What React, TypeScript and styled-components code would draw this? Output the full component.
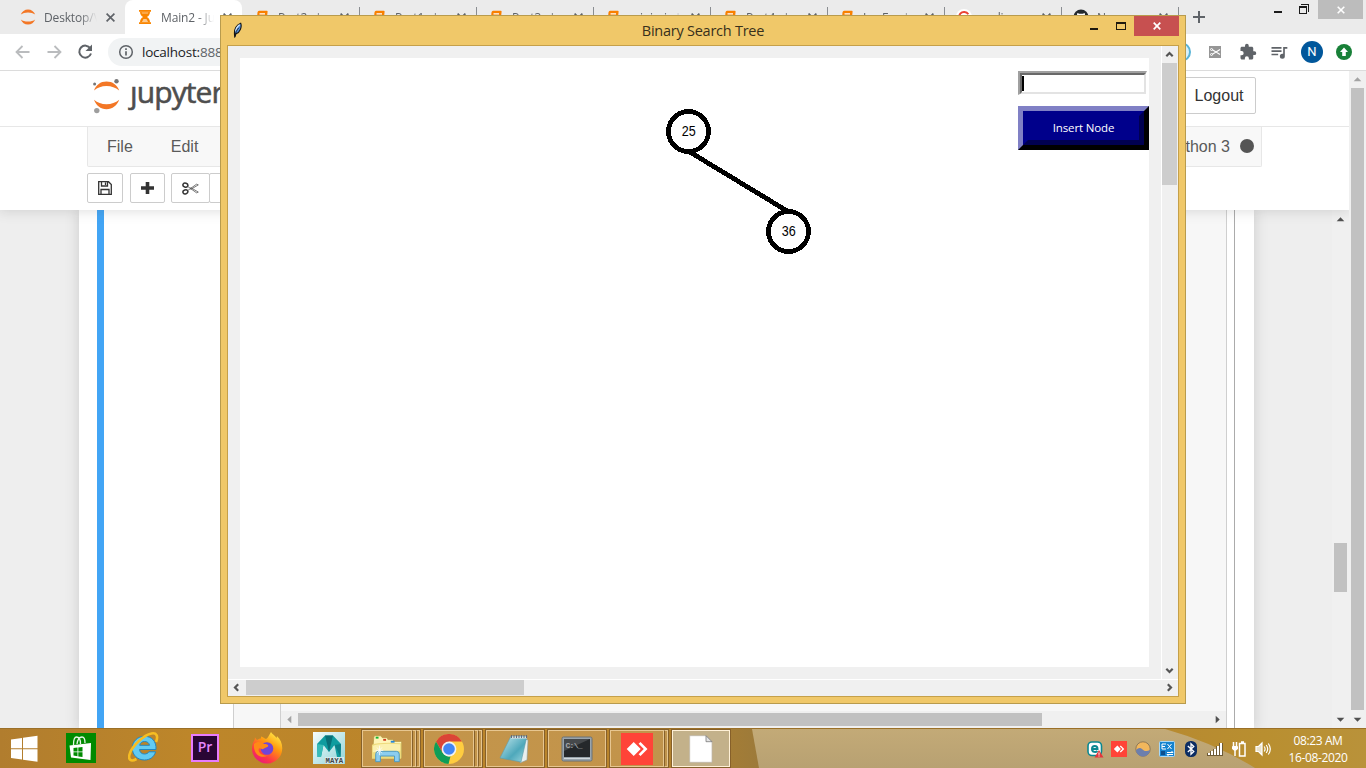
import React from "react";
import styled, { createGlobalStyle, css } from "styled-components";

const ui = `"Open Sans", "Noto Sans", sans-serif`;
const helv = `"Liberation Sans", Arial, sans-serif`;

const Global = createGlobalStyle`
  *{box-sizing:border-box}
  body{margin:0;overflow:hidden;background:#fff;font-family:${ui}}
  svg{display:block;flex:none}
`;

const Desktop = styled.div`
  position: relative;
  width: 1366px;
  height: 768px;
  overflow: hidden;
  display: flex;
  flex-direction: column;
`;
const Browser = styled.div`
  flex: none;
  height: 728px;
  display: flex;
  flex-direction: column;
  overflow: hidden;
`;

/* ---------- tab strip ---------- */
const TabStrip = styled.div`
  height: 34px;
  flex: none;
  display: flex;
  padding-left: 8px;
  background: #ebebeb;
`;
const Tab = styled.div<{ $active?: boolean; $sep?: boolean }>`
  position: relative;
  width: 117px;
  height: 34px;
  flex: none;
  display: flex;
  align-items: center;
  padding: 0 10px 0 12px;
  border-radius: 8px 8px 0 0;
  background: ${(p) => (p.$active ? "#fff" : "transparent")};
  ${(p) =>
    p.$sep &&
    css`
      &::after {
        content: "";
        position: absolute;
        right: -1px;
        top: 7px;
        width: 1px;
        height: 20px;
        background: #8a8d91;
      }
    `}
`;
const Favicon = styled.div`
  width: 16px;
  display: flex;
  justify-content: center;
`;
const TabTitle = styled.span`
  width: 54px;
  margin: 1px 0 0 8px;
  overflow: hidden;
  white-space: nowrap;
  font-size: 12px;
  line-height: 16px;
  letter-spacing: -0.15px;
  color: #5f6368;
  mask-image: linear-gradient(to right, #000 36px, transparent 53px);
`;
const TabClose = styled.svg`
  margin-left: auto;
`;
const NewTab = styled.div`
  display: flex;
  align-items: center;
  padding-left: 15px;
`;
const BrowserControls = styled.div`
  margin-left: auto;
  display: flex;
  align-items: flex-start;
  padding-right: 3px;
`;
const ControlIcon = styled.div`
  width: 26px;
  height: 19px;
  display: flex;
  justify-content: center;
`;
const BrowserClose = styled.div`
  width: 45px;
  height: 19px;
  margin-left: 1px;
  display: flex;
  align-items: center;
  justify-content: center;
  background: #bcbcbc;
`;

/* ---------- toolbar ---------- */
const Toolbar = styled.div`
  height: 37px;
  flex: none;
  display: flex;
  align-items: center;
  padding: 0 14px 0 13px;
  border-bottom: 1px solid #dcdcdc;
  background: #fff;
`;
const NavButtons = styled.div`
  width: 95px;
  display: flex;
  gap: 11px;
`;
const Omnibox = styled.div`
  width: 1040px;
  height: 28px;
  display: flex;
  align-items: center;
  gap: 8px;
  padding-left: 10px;
  border-radius: 14px;
  background: #f1f3f4;
  color: #5f6368;
  font-size: 13.5px;
  letter-spacing: -0.22px;
  b {
    font-weight: 400;
    color: #202124;
  }
`;
const Extensions = styled.div`
  margin-left: auto;
  display: flex;
  align-items: center;
  gap: 12px;
`;
const Avatar = styled.div`
  width: 22px;
  height: 22px;
  margin-right: 1px;
  border-radius: 50%;
  background: #01579b;
  color: #fff;
  font: 13px/22px Roboto, sans-serif;
  text-align: center;
`;

/* ---------- page ---------- */
const Page = styled.div`
  flex: 1;
  min-height: 0;
  display: flex;
`;
const PageMain = styled.div`
  width: 1349px;
  display: flex;
  flex-direction: column;
  overflow: hidden;
`;
const Header = styled.div`
  z-index: 1;
  height: 139px;
  flex: none;
  background: #fff;
  box-shadow: 0 0 12px 1px rgba(87, 87, 87, 0.2);
`;
const LogoRow = styled.div`
  height: 56px;
  display: flex;
  justify-content: space-between;
  padding: 6px 93px 0 91px;
  border-bottom: 1px solid #e7e7e7;
`;
const Logo = styled.div`
  display: flex;
`;
const Wordmark = styled.span`
  margin: -7px 0 0 3px;
  padding-left: 4px;
  font-size: 30px;
  line-height: 44px;
  letter-spacing: -0.9px;
  color: #4e4e4e;
  -webkit-text-stroke: 0.6px #4e4e4e;
  clip-path: polygon(11px 0, 100% 0, 100% 100%, 0 100%, 0 16px, 11px 16px);
`;
const Logout = styled.div`
  width: 74px;
  height: 37px;
  border: 1px solid #ccc;
  border-radius: 2px;
  color: #333;
  font: 16px/36px ${helv};
  text-align: center;
`;
const MenuBar = styled.div`
  width: 1175px;
  height: 40px;
  margin-left: 87px;
  display: flex;
  align-items: center;
  gap: 38px;
  padding: 0 7px 0 19px;
  border: 1px solid #e7e7e7;
  border-top: 0;
  border-radius: 0 0 2px 2px;
  background: #f8f8f8;
  color: #5a5a5a;
  font: 16px/20px ${helv};
`;
const Kernel = styled.div`
  margin-left: auto;
  display: flex;
  align-items: center;
  gap: 10px;
`;
const KernelDot = styled.i`
  width: 14px;
  height: 14px;
  margin-top: -1px;
  border-radius: 50%;
  background: #555;
`;
const ToolRow = styled.div`
  display: flex;
  padding: 6px 0 0 87px;
`;
const ToolButton = styled.div<{ $w?: number; $gap?: number }>`
  width: ${(p) => p.$w ?? 35}px;
  height: 30px;
  margin-left: ${(p) => p.$gap ?? 0}px;
  display: flex;
  align-items: center;
  justify-content: center;
  border: 1px solid #ccc;
  border-radius: 2px;
`;
const NotebookArea = styled.div`
  flex: 1;
  min-height: 0;
  display: flex;
  padding-left: 79px;
  background: #eee;
`;
const Notebook = styled.div`
  width: 1175px;
  display: flex;
  padding-left: 18px;
  background: #fff;
  box-shadow: 0 0 12px 1px rgba(87, 87, 87, 0.2);
`;
const Cell = styled.div`
  width: 1138px;
  display: flex;
  padding: 0 7px 0 129px;
  border-left: 7px solid #42a5f5;
  border-right: 1px solid #ababab;
`;
const OutputPrompt = styled.div`
  width: 47px;
  background: #f7f7f7;
  border-left: 1px solid #cfcfcf;
`;
const Output = styled.div`
  flex: 1;
  display: flex;
  flex-direction: column;
  justify-content: flex-end;
  background: #f7f7f7;
  border: solid #cfcfcf;
  border-width: 0 1px;
`;

/* ---------- scroll bars ---------- */
const ScrollBar = styled.div<{ $dir: "v" | "h" }>`
  flex: none;
  display: flex;
  flex-direction: ${(p) => (p.$dir === "v" ? "column" : "row")};
  ${(p) => (p.$dir === "v" ? "width: 17px;" : "height: 17px;")}
  background: #f0f0f0;
`;
const PageScroll = styled(ScrollBar)`
  padding: ${(p) => (p.$dir === "v" ? "0 2px" : "2px 0")};
`;
const AreaScroll = styled(PageScroll)`
  margin-left: auto;
  padding-top: 1px;
`;
const TkScroll = styled(ScrollBar)`
  border: 0 solid #fff;
  ${(p) =>
    p.$dir === "v"
      ? "border-left-width:1px; padding-right:1px;"
      : "border-top-width:1px; padding-bottom:1px;"}
`;
const Thumb = styled.div<{ $size: number; $tk?: boolean; $gap?: number }>`
  flex: 0 0 ${(p) => p.$size}px;
  margin-left: ${(p) => p.$gap ?? 0}px;
  background: ${(p) => (p.$tk ? "#cdcdcd" : "#c1c1c1")};
`;
const Track = styled.div<{ $size?: number }>`
  flex: ${(p) => (p.$size ? `0 0 ${p.$size}px` : "1")};
`;
const ArrowBox = styled.div`
  flex: 0 0 17px;
  display: flex;
  align-items: center;
  justify-content: center;
`;

/* ---------- floating window ---------- */
const Window = styled.div`
  position: absolute;
  left: 220px;
  top: 15px;
  z-index: 2;
  width: 966px;
  height: 689px;
  display: flex;
  flex-direction: column;
  padding: 0 6px 6px;
  border: 1px solid #b89b4d;
  background: #f0c869;
`;
const TitleBar = styled.div`
  height: 29px;
  flex: none;
  display: grid;
  grid-template-columns: 200px 1fr 200px;
  padding-left: 5px;
`;
const Title = styled.div`
  padding-right: 5px;
  text-align: center;
  font-size: 14.5px;
  line-height: 29px;
  letter-spacing: -0.25px;
  color: #38301b;
`;
const Feather = styled.svg`
  margin-top: 6px;
`;
const WindowControls = styled.div`
  display: flex;
  justify-content: flex-end;
`;
const WindowButton = styled.div<{ $close?: boolean }>`
  width: ${(p) => (p.$close ? 45 : 27)}px;
  height: 20px;
  display: flex;
  align-items: center;
  justify-content: center;
  background: ${(p) => (p.$close ? "#c75050" : "transparent")};
`;
const Client = styled.div`
  flex: 1;
  display: flex;
  flex-direction: column;
  border: 1px solid #c5a04a;
  background: #f0f0f0;
`;
const ClientBody = styled.div`
  flex: 1;
  display: flex;
`;
const CanvasFrame = styled.div`
  flex: 1;
  padding: 12px;
`;
const Canvas = styled.div`
  position: relative;
  width: 909px;
  height: 609px;
  background: #fff;
`;
const Tree = styled.svg`
  position: absolute;
  inset: 0;
  font: 14px ${helv};
`;
const Controls = styled.div`
  width: 131px;
  margin-left: 778px;
  padding-top: 13px;
  display: flex;
  flex-direction: column;
  gap: 11px;
`;
const Entry = styled.div`
  width: 129px;
  height: 24px;
  border: solid;
  border-width: 2px 1px 1px 2px;
  border-color: #a0a0a0 #fff #fff #a0a0a0;
`;
const EntryInner = styled.div`
  height: 21px;
  border: 2px solid;
  border-color: #696969 #e3e3e3 #e3e3e3 #696969;
`;
const Caret = styled.div`
  width: 2px;
  height: 15px;
  margin-top: 1px;
  background: #000;
`;
const InsertButton = styled.div`
  height: 44px;
  border: 5px solid;
  border-color: #8080c5 #000 #000 #8080c5;
`;
const InsertFace = styled.div`
  height: 34px;
  border: 5px solid;
  border-color: #00008b #000050 #000050 #00008b;
  background: #00008b;
  color: #fff;
  font-size: 11.5px;
  line-height: 24px;
  letter-spacing: -0.15px;
  text-align: center;
`;

/* ---------- taskbar ---------- */
const Taskbar = styled.div`
  position: relative;
  z-index: 3;
  height: 40px;
  flex: none;
  display: flex;
  border-top: 1px solid #9b7028;
  background: #bb852b;
`;
const Wallpaper = styled.svg`
  position: absolute;
  inset: 0;
  z-index: -1;
`;
const StartButton = styled.div`
  width: 50px;
  display: flex;
  align-items: center;
  padding-left: 10px;
`;
const Pinned = styled.div`
  width: 62px;
  display: flex;
  align-items: center;
  justify-content: center;
  padding-bottom: 2px;
`;
const Tasks = styled.div`
  display: flex;
  gap: 2px;
  padding-left: 1px;
`;
const Task = styled.div<{ $active?: boolean }>`
  width: 60px;
  height: 39px;
  display: flex;
  border: 1px solid #86602a;
  background: ${(p) => (p.$active ? "#c3b18a" : "rgba(207,171,120,.42)")};
  ${(p) => p.$active && "box-shadow: inset 0 0 0 1px #fff;"}
`;
const TaskFace = styled.div`
  flex: 1;
  display: flex;
  align-items: center;
  justify-content: center;
  border: 1px solid rgba(255, 232, 190, 0.6);
`;
const TaskEdge = styled.div`
  width: 4px;
  border: 1px solid rgba(255, 232, 190, 0.6);
  border-left-color: #86602a;
`;
const Tray = styled.div`
  margin-left: auto;
  display: flex;
  align-items: center;
  padding-right: 7px;
`;
const TrayIcon = styled.div`
  width: 24px;
  display: flex;
  justify-content: center;
  padding-top: 1px;
`;
const Clock = styled.div`
  width: 82px;
  margin-left: 2px;
  color: #fff;
  font-size: 12px;
  line-height: 17px;
  letter-spacing: -0.38px;
  text-align: center;
  white-space: nowrap;
`;

/* ---------- small drawings ---------- */
type Dir = "up" | "down" | "left" | "right";
const turn: Record<Dir, number> = { up: 0, right: 90, down: 180, left: 270 };

const Triangle = ({ dir, light }: { dir: Dir; light?: boolean }) => (
  <ArrowBox>
    <svg width="9" height="9" viewBox="0 0 9 9">
      <path d="M4.5 2.300 8.300 6.300H.7z" fill={light ? "#a3a3a3" : "#505050"} transform={`rotate(${turn[dir]} 4.5 4.5)`} />
    </svg>
  </ArrowBox>
);
const Chevron = ({ dir }: { dir: Dir }) => (
  <ArrowBox>
    <svg width="9" height="9" viewBox="0 0 9 9">
      <path d="M1.3 6.2 4.5 3l3.2 3.2" fill="none" stroke="#555" strokeWidth="2.2" transform={`rotate(${turn[dir]} 4.5 4.5)`} />
    </svg>
  </ArrowBox>
);
const Cross = ({ size, color, w }: { size: number; color: string; w: number }) => (
  <svg width={size} height={size} viewBox="0 0 8 8">
    <path d="M.7.7l6.6 6.6M7.3.7.7 7.3" stroke={color} strokeWidth={w} />
  </svg>
);
const JupyterMark = () => (
  <svg width="16" height="16" viewBox="0 0 16 16" fill="#f37726">
    <path d="M.8 5.6C2 2.500 4.600.5 8 .5s6 2 7.200 5.100C13.300 4.200 11 3.400 8 3.400S2.700 4.200.8 5.600z" />
    <path d="M.8 10.400C2 13.500 4.600 15.500 8 15.500s6-2 7.200-5.100C13.300 11.800 11 12.600 8 12.600s-5.300-.8-7.200-2.200z" />
  </svg>
);
const Hourglass = () => (
  <svg width="12" height="16" viewBox="0 0 12 16" fill="#f98500">
    <path d="M0 1h12v1.800H0zM0 13.200h12V15H0z" />
    <path d="M1 2.500h10c0 3-1.300 4.600-3.200 5.500 1.900.9 3.200 2.500 3.200 5.500H1c0-3 1.300-4.600 3.200-5.500C2.300 7.100 1 5.500 1 2.500z" />
    <path d="M2.600 3.500h6.800l-.4 1H3zM4.500 10h3l1.600 3H2.900z" fill="#ffe0bd" opacity=".75" />
  </svg>
);
const Book = () => (
  <svg width="12" height="14" viewBox="0 0 12 14">
    <path d="M3 .8h7.800q1 0 .8 1L10.500 12q-.3 1.200-1.300 1.200H2Q.5 13.200.7 11L1.500 2.300Q1.800.8 3 .8z" fill="#f98000" />
    <path d="M3.500 3.800h5.500M3.500 6.300h5.500" stroke="#fff" strokeWidth="1.300" />
  </svg>
);
const SiteG = () => (
  <svg width="16" height="16" viewBox="0 0 16 16">
    <circle cx="8" cy="8" r="8" fill="#fff" />
    <path d="M12.300 5.300A5 5 0 1 0 13 8.500H8" fill="none" stroke="#ea4335" strokeWidth="2" />
  </svg>
);
const GitHubMark = () => (
  <svg width="16" height="16" viewBox="0 0 16 16">
    <circle cx="8" cy="8" r="7.600" fill="#24292e" />
    <path d="M4.300 4l2 .8h3.400l2-.8.4 2.500c.6 3-1 4.500-4.100 4.500S3.300 9.500 3.900 6.500zM6 11h4v4H6z" fill="#fff" />
  </svg>
);
const LogoMark = () => (
  <svg width="32" height="38" viewBox="0 0 32 38">
    <path d="M3 13.500C5 8 9.500 4.600 15.500 4.600S26.200 8 28.200 13.500C24.500 10.500 20.500 9 15.500 9S6.500 10.500 3 13.500zM3 22.700c2 5.600 6.500 9.500 12.500 9.500s10.700-3.900 12.700-9.500C24.500 25.600 20.500 27.200 15.500 27.200S6.500 25.600 3 22.700z" fill="#f37726" />
    <circle cx="25.500" cy="4.200" r="2.200" fill="#767677" />
    <circle cx="3.600" cy="7" r="1.500" fill="#767677" />
    <circle cx="5.800" cy="33.600" r="2.700" fill="#9e9e9e" />
  </svg>
);
const tabs: [React.ReactNode, string, boolean?][] = [
  [<JupyterMark />, "Desktop/\\"],
  [<Hourglass />, "Main2 - Ju", true],
  [<Book />, "Part2 - Ju"],
  [<Book />, "Part1 - Ju"],
  [<Book />, "Part3 - Ju"],
  [<Book />, "minimi - Ju"],
  [<Book />, "Part4 - Ju"],
  [<Book />, "Ins Fo - Ju"],
  [<SiteG />, "scaling -"],
  [<GitHubMark />, "New"],
];

const AnyDesk = ({ size }: { size: number }) => (
  <svg width={size} height={size} viewBox="0 0 32 32">
    <path d="M0 0h32v32H0z" fill="#ff4438" />
    <path d="M12.700 9l7 7-7 7-7-7zM17.600 10.800l1.900-1.800 7 7-7 7-1.900-1.800 5.200-5.200z" fill="#fff" />
  </svg>
);
const Store = () => (
  <svg width="30" height="30" viewBox="0 0 30 30">
    <path d="M0 0h30v30H0z" fill="#008a00" />
    <path d="M7.500 12q0-8 3-8 4 0 4 7M11 11q1-7 5-7 3 0 3 6" fill="none" stroke="#e8f6e8" strokeWidth="1.300" />
    <path d="M3.500 12.500l21.500-2.500-.5 17L5 24.500z" fill="#fff" />
    <path d="M7.500 15l4-.5v4h-4zm4.800-.6L16.500 14v4.500h-4.200zM7.500 19.200h4v4l-4-.6zm4.800 0h4.200V24l-4.200-.6z" fill="#008a00" />
  </svg>
);
const Explorer = () => (
  <svg width="32" height="31" viewBox="0 0 34 32">
    <path d="M3 4q0-1.500 1.500-1.500h6L12 4.500h5l1 2h5l1.500 2h7q1 0 1 1V26H1z" fill="#fff5b8" stroke="#b59a45" strokeWidth=".8" />
    <path d="M1 12q8-3 31-1.500V27H1z" fill="#eedb7c" />
    <path d="M2 13q9-3 29-1.500v7L2 20z" fill="#fbf0ae" />
    <path d="M5 3.500h3v2H5z" fill="#16b432" />
    <path d="M13 5.800h3v2h-3z" fill="#d23d20" />
    <path d="M21 7.800h4v2h-4z" fill="#2486d8" />
    <path d="M5 30v-8q0-3 3-3h19q3 0 3 3v8h-5v-6H10v6z" fill="#8ccdef" stroke="#4a97bf" />
    <path d="M9 13v10M5 18h8M6.500 15l5 6M11.500 15l-5 6" stroke="#fff" strokeWidth=".8" />
  </svg>
);
const Chrome = () => (
  <svg width="30" height="30" viewBox="0 0 30 30">
    <circle cx="15" cy="15" r="15" fill="#ffcd40" />
    <path d="M15 15 8.500 18.750 2 7.500A15 15 0 0 1 28 7.500H15z" fill="#db4437" />
    <path d="M2 7.500 8.500 18.750 15 22.500 14.500 30A15 15 0 0 1 2 7.500z" fill="#0f9d58" />
    <path d="M14.500 30 21.500 18.750 15 15 10 20l4 3z" fill="#ffcd40" />
    <path d="M8.500 18.750A7.500 7.500 0 0 0 16.500 22.300L14.500 30z" fill="#0f9d58" />
    <circle cx="15" cy="15" r="7.400" fill="#f1f1f1" />
    <circle cx="15" cy="15" r="5.800" fill="#4285f4" />
  </svg>
);
const Notepad = () => (
  <svg width="32" height="30" viewBox="0 0 32 30">
    <defs>
      <linearGradient id="np" x1="0" y1="0" x2="1" y2="1">
        <stop offset="0" stopColor="#c8eaf0" />
        <stop offset=".6" stopColor="#4ea8bb" />
        <stop offset="1" stopColor="#a0d8e0" />
      </linearGradient>
    </defs>
    <path d="M23 4l6 2-1 20-7 3z" fill="#e9efef" stroke="#8a9a9a" strokeWidth=".6" />
    <path d="M12 2h16l-6 26L1 24z" fill="url(#np)" stroke="#5e9aa8" strokeWidth=".6" />
    <path d="M12 3.500h16" stroke="#dce4e4" strokeWidth="2" />
    <path d="M12 2.500h16" stroke="#667" strokeWidth="3" strokeDasharray="1 1.500" />
  </svg>
);
const Terminal = () => (
  <svg width="32" height="26" viewBox="0 0 32 26">
    <rect x="1" y="1" width="30" height="24" rx="1.500" fill="#9aa5ad" stroke="#687077" />
    <path d="M3 3h26v18H3z" fill="#25282b" />
    <path d="M3 3h26L3 15z" fill="#46494c" />
    <path d="M3 22.500h26" stroke="#d2d8dc" />
    <text x="4.500" y="11.500" fill="#a6a9ac" fontFamily="Liberation Mono, monospace" fontSize="8" fontWeight="700" letterSpacing="-.7">C:\_</text>
  </svg>
);
const BlankFile = () => (
  <svg width="24" height="28" viewBox="0 0 24 28">
    <path d="M.7.700H17L23 6.700V27.300H.7z" fill="#fff" stroke="#bbb6aa" strokeWidth=".7" />
    <path d="M17 .7v6h6z" fill="#e4e4e4" stroke="#777" strokeWidth=".8" />
  </svg>
);
const IE = () => (
  <svg width="31" height="31" viewBox="0 0 31 31">
    <path d="M28 17.500H11.500c.4 3 2.300 4.500 5 4.500 2 0 3.500-.8 4.400-2.200h6.700C26 25 22 28 16.500 28 9.500 28 4.300 23 4.300 16.200S9.500 4.300 16.500 4.300c7.300 0 12 5 11.500 13.200zM11.700 13.300h9.800c-.4-2.500-2.300-3.800-4.900-3.800s-4.400 1.300-4.900 3.800z" fill="#62cbf3" stroke="#2386c0" strokeWidth="1" />
    <path d="M28 10C30.500 4 28.500.5 23.500 1.500 16 3 4 13.500 1.500 22.500c-1.500 5.500 1.500 7.500 7 4.500" fill="none" stroke="#f6bd22" strokeWidth="2.600" />
  </svg>
);
const Premiere = () => (
  <svg width="28" height="28" viewBox="0 0 28 28">
    <path d="M1 1h26v26H1z" fill="#2a0634" stroke="#e77cff" strokeWidth="2" />
    <text x="14" y="18.300" textAnchor="middle" fill="#e588ff" fontFamily="Open Sans, sans-serif" fontSize="14" fontWeight="600">Pr</text>
  </svg>
);
const Firefox = () => (
  <svg width="32" height="32" viewBox="0 0 32 32">
    <defs>
      <linearGradient id="ff" x1=".85" y1="0" x2=".2" y2="1">
        <stop offset="0" stopColor="#fff44f" />
        <stop offset=".4" stopColor="#ff980e" />
        <stop offset=".75" stopColor="#ff3647" />
        <stop offset="1" stopColor="#e31587" />
      </linearGradient>
    </defs>
    <path d="M20 0c1 2 4 3.500 5.500 6 .5-.8.400-2 .4-2 3.500 3 5.600 8 5.300 13A15 15 0 0 1 16 31.500 15 15 0 0 1 1 17c0-4 1-7 2.500-9L4 5.500l2 2.500c2-1.500 3-1.500 4-1.500V4.500c2 .5 3.500 2 5 2.500 2-1 3-4 5-7z" fill="url(#ff)" />
    <circle cx="16" cy="16.500" r="6.300" fill="#7145d8" />
    <path d="M3 12c4-3 7-2 10 0 3 0 5 1 4 2.500-1 1-3 1-4 2-2 2-3-1-5 0-2 4 4 8 9 7-7 4-15-1-14-11.500z" fill="#ff8a16" />
  </svg>
);
const Maya = () => (
  <svg width="32" height="32" viewBox="0 0 32 32">
    <defs>
      <linearGradient id="my" x1="0" y1="0" x2="1" y2="1">
        <stop offset="0" stopColor="#f6fcfc" />
        <stop offset="1" stopColor="#8fd4d8" />
      </linearGradient>
    </defs>
    <path d="M0 0h32v32H0z" fill="url(#my)" />
    <path d="M4 12 12 3.500h8L28 12l-.5 13H24l-2.500-12L16 20l-5.500-7L8 25H4.500z" fill="#0f9c9f" />
    <path d="M12 3.500 16 20l4-16.500z" fill="#086f77" />
    <path d="M4 12l6.500 1L8 25H4.500z" fill="#37bcb8" />
    <path d="M21.500 13l6.500-1-.5 13z" fill="#0b7f86" />
    <path d="M12 25h19v6.500H12z" fill="#d5eaec" />
    <text x="12.500" y="31" fill="#444" fontFamily="Liberation Mono, monospace" fontSize="7.300" fontWeight="700">MAYA</text>
  </svg>
);
const trayIcons = [
  <svg width="17" height="17" viewBox="0 0 17 17">
    <rect x="1" y="1" width="13.500" height="13.500" rx="4" fill="#fff" stroke="#0b8891" strokeWidth="1.600" />
    <path d="M5 8h5.500c0-4-5.500-4-5.500 0 0 3.500 4 3.500 5.500 2" fill="none" stroke="#0b8891" strokeWidth="2" />
    <path d="M12 9l4.500 7.500h-9z" fill="#e2363c" />
    <path d="M12 11.500v2.300m0 .7v1" stroke="#fff" />
  </svg>,
  <AnyDesk size={16} />,
  <svg width="16" height="16" viewBox="0 0 16 16">
    <circle cx="8" cy="8" r="7.200" fill="#f2b75c" stroke="#806c50" strokeWidth=".8" />
    <path d="M1 9c2-2 4-3 6-1s4 3 8 1c0 4-4 6.500-7 6.500S1 13 1 9z" fill="#6c7fad" />
  </svg>,
  <svg width="16" height="16" viewBox="0 0 16 16">
    <rect x=".5" y=".5" width="15" height="15" rx="1" fill="#1683cf" stroke="#a8d8f6" />
    <path d="M3 3h4M3 3v5h4M3 5.500h3M8.500 3l4 5m0-5-4 5M8 11.500h6l-1.500-1.500M14 13.500H8l1.500 1.500" fill="none" stroke="#fff" />
    <path d="M2 10h4v4H2z" fill="#0b4f8e" />
  </svg>,
  <svg width="12" height="16" viewBox="0 0 12 16">
    <rect width="12" height="16" rx="5.500" fill="#0c2d63" />
    <path d="M2.800 5l6 5.500L6 13.300V2.700l2.800 2.800L2.800 11" fill="none" stroke="#fff" strokeWidth="1.300" />
  </svg>,
  <svg width="16" height="14" viewBox="0 0 16 14" shapeRendering="crispEdges">
    {[2, 4, 6, 9, 12].map((h, i) => (
      <g key={i}>
        <rect x={i * 3} y={13 - h} width="4" height={h + 1} fill="#6d5a35" />
        <rect x={i * 3 + 1} y={13 - h} width="2" height={h} fill="#fff" />
      </g>
    ))}
  </svg>,
  <svg width="16" height="16" viewBox="0 0 16 16" fill="none" stroke="#fff" strokeWidth="1.500">
    <path d="M8.500 2.500h5.500V15H8.500zM10 1h3M2.500 1v4M5.500 1v4" />
    <path d="M1.500 5.500h5v2.500q-2.500 3-5 0z" fill="#fff" strokeWidth="1" />
    <path d="M4 9.500V15" />
  </svg>,
  <svg width="16" height="16" viewBox="0 0 16 16" fill="none" stroke="#fff" strokeWidth="1.200">
    <path d="M1 5.500h2.500L7 2v12L3.500 10.500H1z" fill="#e9e2cc" />
    <path d="M9.200 5.500q1.800 2.500 0 5M11.200 4q3 4 0 8M13.300 2.500q4 5.500 0 11" />
  </svg>,
];

export default function App() {
  return (
    <Desktop>
      <Global />
      <Browser>
        <TabStrip>
          {tabs.map(([icon, title, active], i) => (
            <Tab key={i} $active={active} $sep={i > 1}>
              <Favicon>{icon}</Favicon>
              <TabTitle>{title}</TabTitle>
              <TabClose width="9" height="9" viewBox="0 0 8 8">
                <path d="M.5.5l7 7M7.500.5l-7 7" stroke="#5f6368" strokeWidth="1.500" />
              </TabClose>
            </Tab>
          ))}
          <NewTab>
            <svg width="12" height="12" viewBox="0 0 12 12">
              <path d="M6 0v12M0 6h12" stroke="#5f6368" strokeWidth="2" />
            </svg>
          </NewTab>
          <BrowserControls>
            <ControlIcon>
              <svg width="8" height="19"><path d="M0 11h8v2H0z" fill="#1b1b1b" /></svg>
            </ControlIcon>
            <ControlIcon>
              <svg width="10" height="19" shapeRendering="crispEdges">
                <path d="M2 4h8v8H9V5H2zM0 6h8v8H0zm1 2v5h6V8z" fill="#1b1b1b" fillRule="evenodd" />
              </svg>
            </ControlIcon>
            <BrowserClose><Cross size={8} color="#fff" w={1.600} /></BrowserClose>
          </BrowserControls>
        </TabStrip>
        <Toolbar>
          <NavButtons>
            {[0, 180].map((a) => (
              <svg key={a} width="20" height="20" viewBox="0 0 20 20">
                <path d="M16.500 10H3.500M9.500 4 3.500 10l6 6" fill="none" stroke="#babcbe" strokeWidth="1.800" transform={`rotate(${a} 10 10)`} />
              </svg>
            ))}
            <svg width="20" height="20" viewBox="0 0 20 20">
              <path d="M15.300 6.300A6 6 0 1 0 16 11.500" fill="none" stroke="#5f6368" strokeWidth="2" />
              <path d="M17 2.500V9h-6.500z" fill="#5f6368" />
            </svg>
          </NavButtons>
          <Omnibox>
            <svg width="16" height="16" viewBox="0 0 16 16" stroke="#5f6368" fill="none" strokeWidth="1.500">
              <circle cx="8" cy="8" r="6.300" />
              <path d="M8 7.200v4.300M8 4.300v1.600" strokeWidth="1.700" />
            </svg>
            <span><b>localhost:</b>8888/notebooks</span>
          </Omnibox>
          <Extensions>
            <svg width="20" height="20" viewBox="0 0 20 20">
              <circle cx="10" cy="10" r="9" fill="#d9f1fa" stroke="#58b3d6" strokeWidth="2" />
              <path d="M6 13q2-6 5-6t3 3q-1 3-4 1" fill="none" stroke="#58b3d6" strokeWidth="2" />
            </svg>
            <svg width="24" height="20" viewBox="0 0 24 20">
              <path d="M6 4h12v12H6z" fill="#969696" />
              <path d="M9 7.500l8 5M9 12.500l8-5" stroke="#fff" strokeWidth="1.100" />
              <circle cx="8.500" cy="7.500" r="1" fill="none" stroke="#fff" />
              <circle cx="8.500" cy="12.500" r="1" fill="none" stroke="#fff" />
            </svg>
            <svg width="18" height="18" viewBox="0 0 24 24" fill="#5f6368">
              <path d="M20.500 11H19V7c0-1.100-.9-2-2-2h-4V3.500a2.500 2.500 0 0 0-5 0V5H4c-1.100 0-2 .9-2 2v3.800h1.500a2.700 2.700 0 0 1 0 5.400H2V20c0 1.100.9 2 2 2h3.800v-1.500a2.700 2.700 0 0 1 5.400 0V22H17c1.100 0 2-.9 2-2v-4h1.500a2.500 2.500 0 0 0 0-5z" />
            </svg>
            <svg width="20" height="20" viewBox="0 0 24 24" fill="#5f6368">
              <path d="M15 6H3v2h12zM15 10H3v2h12zM3 16h8v-2H3zM17 6v8.200c-.3-.1-.7-.2-1-.2a3 3 0 1 0 3 3V8h3V6z" />
            </svg>
            <Avatar>N</Avatar>
            <svg width="16" height="16" viewBox="0 0 16 16">
              <circle cx="8" cy="8" r="8" fill="#188038" />
              <path d="M8 3.500 12 8H9.800v4H6.200V8H4z" fill="#fff" />
            </svg>
          </Extensions>
        </Toolbar>
        <Page>
          <PageMain>
            <Header>
              <LogoRow>
                <Logo>
                  <LogoMark />
                  <Wordmark>jupyter</Wordmark>
                </Logo>
                <Logout>Logout</Logout>
              </LogoRow>
              <MenuBar>
                <span>File</span>
                <span>Edit</span>
                <Kernel>Python 3<KernelDot /></Kernel>
              </MenuBar>
              <ToolRow>
                <ToolButton $w={36}>
                  <svg width="14" height="14" viewBox="0 0 14 14" fill="none" stroke="#333" strokeWidth="1.300">
                    <path d="M.7.700H10.500L13.300 3.500v9.800H.7zM3 13V8.500h8V13M3.500 1v4h6V1M7.500 1.500v2.500" />
                  </svg>
                </ToolButton>
                <ToolButton $gap={7}>
                  <svg width="13" height="12" viewBox="0 0 13 12"><path d="M4.700 0h3.600v4.200H13v3.600H8.300V12H4.700V7.800H0V4.200h4.700z" fill="#333" /></svg>
                </ToolButton>
                <ToolButton $w={39} $gap={6}>
                  <svg width="17" height="13" viewBox="0 0 17 13" fill="none" stroke="#333">
                    <ellipse cx="3.400" cy="3.200" rx="2.500" ry="2" strokeWidth="1.500" transform="rotate(20 3.400 3.200)" />
                    <ellipse cx="3.400" cy="9.800" rx="2.500" ry="2" strokeWidth="1.500" transform="rotate(-20 3.400 9.800)" />
                    <path d="M5.500 4.300 14.500 10.800l1.800-.7L8.500 5.500M5.500 8.700 14.500 2.200l1.800.7L8.500 7.500" strokeWidth=".8" stroke="#555" />
                  </svg>
                </ToolButton>
                <ToolButton $gap={-1} />
              </ToolRow>
            </Header>
            <NotebookArea>
              <Notebook>
                <Cell>
                  <OutputPrompt />
                  <Output>
                    <PageScroll $dir="h">
                      <Triangle dir="left" light />
                      <Thumb $size={744} />
                      <Track />
                      <Triangle dir="right" />
                    </PageScroll>
                  </Output>
                </Cell>
              </Notebook>
              <AreaScroll $dir="v">
                <Triangle dir="up" />
                <Track />
                <Thumb $size={49} />
                <Track $size={119} />
                <Triangle dir="down" />
              </AreaScroll>
            </NotebookArea>
          </PageMain>
          <PageScroll $dir="v">
            <Triangle dir="up" light />
            <Thumb $size={622} />
            <Track />
            <Triangle dir="down" />
          </PageScroll>
        </Page>
      </Browser>

      <Window>
        <TitleBar>
          <Feather width="11" height="16" viewBox="0 0 12 17">
            <path d="M3 15.500C2 10 3 4 9.500 1c1.500 4-.5 10-5 11.500z" fill="#4f8fe0" stroke="#151515" strokeWidth="1.200" />
            <path d="M4.300 10Q4 6 8.300 2.700" fill="none" stroke="#d5e9ff" strokeWidth="1.500" />
            <path d="M3.200 16.500Q4 9 7.500 6" fill="none" stroke="#111" />
          </Feather>
          <Title>Binary Search Tree</Title>
          <WindowControls>
            <WindowButton>
              <svg width="8" height="12"><path d="M0 8h8v2H0z" fill="#1f1a0e" /></svg>
            </WindowButton>
            <WindowButton>
              <svg width="10" height="8"><path d="M0 0h10v8H0zm1 2v5h8V2z" fill="#1f1a0e" fillRule="evenodd" /></svg>
            </WindowButton>
            <WindowButton $close><Cross size={8} color="#fff" w={1.700} /></WindowButton>
          </WindowControls>
        </TitleBar>
        <Client>
          <ClientBody>
            <CanvasFrame>
              <Canvas>
                <Tree width="909" height="609" viewBox="240 58 909 609">
                  <path d="M689 151.500 788 211.500" stroke="#000" strokeWidth="4.800" shapeRendering="crispEdges" />
                  {[[688.5, 131.5, 25], [788.5, 231.5, 36]].map(([x, y, n]) => (
                    <g key={n}>
                      <circle cx={x} cy={y} r="20" fill="#fff" stroke="#000" strokeWidth="4.800" shapeRendering="crispEdges" />
                      <text x={x + 0.3} y={y + 4.5} textAnchor="middle" textLength="14" lengthAdjust="spacingAndGlyphs">{n}</text>
                    </g>
                  ))}
                </Tree>
                <Controls>
                  <Entry><EntryInner><Caret /></EntryInner></Entry>
                  <InsertButton><InsertFace>Insert Node</InsertFace></InsertButton>
                </Controls>
              </Canvas>
            </CanvasFrame>
            <TkScroll $dir="v">
              <Chevron dir="up" />
              <Thumb $tk $size={122} />
              <Track />
              <Chevron dir="down" />
            </TkScroll>
          </ClientBody>
          <TkScroll $dir="h">
            <Chevron dir="left" />
            <Thumb $tk $size={278} $gap={1} />
            <Track />
            <Chevron dir="right" />
          </TkScroll>
        </Client>
      </Window>

      <Taskbar>
        <Wallpaper width="1366" height="39" viewBox="0 0 1366 39" preserveAspectRatio="none">
          <defs>
            <linearGradient id="w1">
              <stop offset="0" stopColor="#b17d2e" />
              <stop offset=".25" stopColor="#bd862a" />
              <stop offset=".85" stopColor="#b9842b" />
              <stop offset="1" stopColor="#9c7a3a" />
            </linearGradient>
            <linearGradient id="w2" x1="0" y1="0" x2="0" y2="1">
              <stop offset="0" stopColor="#c3aa77" />
              <stop offset="1" stopColor="#b8a172" />
            </linearGradient>
            <linearGradient id="w3">
              <stop offset="0" stopColor="#b78a30" />
              <stop offset=".5" stopColor="#b98f30" />
              <stop offset="1" stopColor="#b9923a" />
            </linearGradient>
          </defs>
          <path d="M0 0h760v39H0z" fill="url(#w1)" />
          <path d="M752 0h614v39H759z" fill="url(#w2)" />
          <path d="M1165 0h201v39H1255Q1215 14 1165 0z" fill="url(#w3)" />
        </Wallpaper>
        <StartButton>
          <svg width="28" height="28" viewBox="0 0 28 28" fill="#fff">
            <path d="M1 4.500 12 3v10.300H1zM13 2.800 27.500.8v12.500H13zM1 14.300h11v10.300L1 23zM13 14.300h14.500v12.500L13 24.800z" />
          </svg>
        </StartButton>
        {[Store, IE, Premiere, Firefox, Maya].map((Icon, i) => (
          <Pinned key={i}><Icon /></Pinned>
        ))}
        <Tasks>
          <Task><TaskFace><Explorer /></TaskFace><TaskEdge /><TaskEdge /></Task>
          <Task><TaskFace><Chrome /></TaskFace><TaskEdge /><TaskEdge /></Task>
          <Task><TaskFace><Notepad /></TaskFace></Task>
          <Task><TaskFace><Terminal /></TaskFace></Task>
          <Task><TaskFace><AnyDesk size={32} /></TaskFace><TaskEdge /></Task>
          <Task $active><TaskFace><BlankFile /></TaskFace></Task>
        </Tasks>
        <Tray>
          {trayIcons.map((icon, i) => (
            <TrayIcon key={i}>{icon}</TrayIcon>
          ))}
          <Clock>08:23 AM<br />16-08-2020</Clock>
        </Tray>
      </Taskbar>
    </Desktop>
  );
}
